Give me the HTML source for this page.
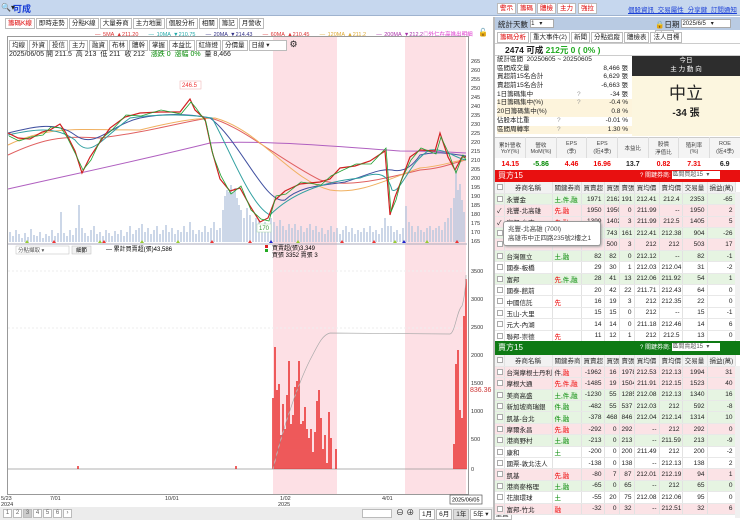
<!DOCTYPE html>
<html><head><meta charset="utf-8"><style>
*{box-sizing:border-box;margin:0;padding:0}
body{width:740px;height:520px;overflow:hidden;background:#fff;font-family:"Liberation Sans","Noto Sans CJK TC",sans-serif;font-size:7px;color:#222;position:relative}
.abs{position:absolute}
.btn{position:absolute;border:1px solid #bbb;background:#fff;font-size:6.5px;line-height:9px;padding:0 2px}
.tab{display:inline-block;border:1px solid #bbb;background:#fff;padding:0 2px;font-size:6.5px;line-height:9px;margin-right:1px}
table{border-collapse:collapse;table-layout:fixed}
.t td{height:11.4px;font-size:6.5px;border-right:1px solid #e2e2e2;border-bottom:1px solid #e8e8e8;padding:0 2px;text-align:right;white-space:nowrap;overflow:hidden}
.t td:nth-child(2),.t td:nth-child(3){text-align:left}
.t tr.h td{background:#f2f2f2;text-align:center;color:#333}
.g td{background:#e6f4e2}.p td{background:#fbe3e6}
.r{color:#e00}.gr{color:#080}
.cb{display:inline-block;width:6px;height:6px;border:1px solid #aaa;background:#fff;vertical-align:middle}
.st div{height:8.7px;line-height:8.7px;font-size:6.5px;position:relative}
.st span{position:absolute;right:4px}
.pg{display:inline-block;width:9px;height:9px;border:1px solid #bbb;background:#fff;font-size:6px;line-height:7px;text-align:center;margin-right:1px;color:#666}
</style></head><body>
<div class="abs" style="left:0;top:0;width:740px;height:16px;background:#c6d7ee;border-bottom:1px solid #9fb3cf"></div>
<div class="abs" style="left:1px;top:3px;font-size:8px">🔍▾</div>
<div class="abs" style="left:13px;top:2px;font-size:9px;color:#1a3fd6;font-weight:bold">可成</div>
<div class="btn" style="left:497px;top:3px;color:#d00">警示</div>
<div class="btn" style="left:517px;top:3px;color:#d00">籌碼</div>
<div class="btn" style="left:537px;top:3px;color:#d00">體檢</div>
<div class="btn" style="left:557px;top:3px;color:#d00">主力</div>
<div class="btn" style="left:578px;top:3px;color:#d00">強拉</div>
<div class="abs" style="left:628px;top:4px;font-size:6.5px;color:#1a3fd6;text-decoration:underline;word-spacing:2px">個股資訊 交易屬性 分享鍵 訂閱通知</div>
<div class="abs" style="left:5px;top:18px"><span class="tab" style="color:#d00">籌碼K線</span><span class="tab">即時走勢</span><span class="tab">分點K線</span><span class="tab">大量券商</span><span class="tab">主力地圖</span><span class="tab">個股分析</span><span class="tab">相關</span><span class="tab">籌記</span><span class="tab">月營收</span></div>
<div class="abs" style="left:95px;top:30px;font-size:5.5px;white-space:nowrap;word-spacing:1px"><span style="color:#d33">— 5MA ▲211.20</span>&nbsp;&nbsp;&nbsp;&nbsp;<span style="color:#2aa">— 10MA ▼210.75</span>&nbsp;&nbsp;&nbsp;&nbsp;<span style="color:#338">— 20MA ▼214.43</span>&nbsp;&nbsp;&nbsp;&nbsp;<span style="color:#d33">— 60MA ▲210.45</span>&nbsp;&nbsp;&nbsp;&nbsp;<span style="color:#da3">— 120MA ▲211.2</span>&nbsp;&nbsp;&nbsp;&nbsp;<span style="color:#a3a">— 200MA ▼212.2</span><span style="color:#d3c">◎外仁在高進出明細</span></div>
<div class="abs" style="left:478px;top:28px;font-size:8px">🔓</div>
<div class="abs" style="left:7px;top:36px;width:462px;height:459px;border:1px solid #999"></div>
<div class="abs" style="left:273px;top:37px;width:64px;height:457px;background:#fde0e5"></div>
<div class="abs" style="left:405px;top:37px;width:61px;height:457px;background:#fde0e5"></div>
<div class="abs" style="left:9px;top:39px"><span class="tab">均線</span><span class="tab">外資</span><span class="tab">投信</span><span class="tab">主力</span><span class="tab">融資</span><span class="tab">布林</span><span class="tab">體幹</span><span class="tab">掌握</span><span class="tab">本益比</span><span class="tab">紅綠燈</span><span class="tab">分價量</span><span class="tab" style="width:38px">日線 ▾</span> <span style="font-size:9px">⚙</span></div>
<div class="abs" style="left:9px;top:49px;font-size:7px">2025/06/05 開 211.5 &nbsp;高 213 &nbsp;低 211 &nbsp;收 212 &nbsp;&nbsp;<span class="gr">漲跌 0 &nbsp;漲幅 0%</span> &nbsp;量 8,466</div>
<svg class="abs" style="left:0;top:0" width="495" height="520">
<g font-size="5.5" fill="#333" font-family="Liberation Sans">
<text x="471" y="63">265</text><text x="471" y="72">260</text><text x="471" y="81">255</text><text x="471" y="90">250</text><text x="471" y="99">245</text><text x="471" y="108">240</text><text x="471" y="117">235</text><text x="471" y="126">230</text><text x="471" y="135">225</text><text x="471" y="144">220</text><text x="471" y="153">215</text><text x="471" y="162">210</text><text x="471" y="171">205</text><text x="471" y="180">200</text><text x="471" y="189">195</text><text x="471" y="198">190</text><text x="471" y="207">185</text><text x="471" y="216">180</text><text x="471" y="225">175</text><text x="471" y="234">170</text><text x="471" y="243">165</text>
<text x="471" y="273">3500</text><text x="471" y="301">3000</text><text x="471" y="329">2500</text><text x="471" y="357">2000</text><text x="471" y="385">1500</text><text x="471" y="413">1000</text><text x="471" y="441">500</text><text x="471" y="471">0</text>
</g>
<text x="470" y="392" font-size="7" fill="#c33">836.36</text>
<path stroke="#b6c6de" stroke-width="1.4" d="M10 242V232M13 242V236M16 242V230M19 242V234M22 242V238M25 242V233M28 242V237M31 242V229M34 242V235M37 242V236M40 242V232M43 242V238M46 242V234M49 242V236M52 242V230M55 242V236M58 242V233M61 242V212M64 242V233M67 242V236M70 242V230M73 242V235M76 242V228M79 242V205M82 242V228M85 242V233M88 242V236M91 242V230M94 242V226M97 242V234M100 242V232M103 242V236M106 242V230M109 242V233M112 242V236M115 242V231M118 242V234M121 242V230M124 242V236M127 242V232M130 242V226M133 242V234M136 242V230M139 242V228M142 242V224M145 242V232M148 242V228M151 242V234M154 242V230M157 242V226M160 242V234M163 242V230M166 242V225M169 242V232M172 242V228M175 242V234M178 242V230M181 242V232M184 242V226M187 242V232M190 242V222M193 242V230M196 242V234M199 242V230M202 242V232M205 242V226M208 242V232M211 242V228M214 242V222M217 242V230M220 242V228M223 242V210M225 242V196M227 242V190M229 242V192M231 242V185M233 242V192M235 242V188M237 242V198M239 242V205M241 242V210M244 242V218M247 242V208M250 242V215M253 242V222M256 242V218M259 242V220M262 242V225M265 242V222M268 242V228M271 242V218M274 242V222M277 242V226M280 242V220M283 242V226M286 242V230M289 242V224M292 242V228M295 242V224M298 242V230M301 242V226M304 242V232M307 242V228M310 242V224M313 242V230M316 242V226M319 242V232M322 242V228M325 242V234M328 242V230M331 242V226M334 242V232M337 242V228M340 242V234M343 242V230M346 242V226M349 242V232M352 242V228M355 242V234M358 242V230M361 242V232M364 242V228M367 242V232M370 242V226M373 242V232M376 242V230M379 242V234M382 242V228M385 242V218M388 242V226M391 242V226M394 242V232M397 242V230M400 242V234M403 242V228M406 242V206M409 242V222M412 242V226M415 242V232M418 242V226M421 242V230M424 242V232M427 242V228M430 242V226M433 242V230M436 242V228M439 242V226M442 242V230M445 242V222M448 242V218M451 242V208M454 242V198M456 242V170M458 242V190M460 242V184M462 242V200M464 242V212"/>
<path fill="none" stroke="#b060c0" stroke-width="1" d="M8 189C70 175 150 158 210 143C260 140 330 146 400 151C430 151 450 152 466 153"/>
<path fill="none" stroke="#e06060" stroke-width="1" d="M8 155C40 140 60 135 100 138C150 132 190 120 210 118C240 125 280 160 320 180C345 188 380 180 420 170C445 168 455 162 466 160"/>
<path fill="none" stroke="#f0b060" stroke-width="1" d="M8 145C50 125 80 130 140 130C180 120 200 118 215 118C260 130 290 180 330 190C360 195 390 178 420 168C445 166 455 160 466 160"/>
<path fill="none" stroke="#4050a0" stroke-width="1" d="M8 133C30 128 55 120 75 135C95 150 110 125 140 118C170 112 195 115 210 118C240 140 265 205 285 200C300 186 320 186 345 182C365 176 380 168 392 170C400 172 410 170 420 155C440 150 455 155 466 156"/>
<path fill="none" stroke="#30a0a0" stroke-width="1" d="M8 135C30 130 55 125 75 140C90 160 100 140 130 118C160 113 195 115 212 118C230 150 250 205 270 215C290 195 320 182 360 178C380 170 388 175 392 190C400 195 410 160 430 150C445 148 455 158 466 160"/>
<path fill="none" stroke="#d02020" stroke-width="1.2" d="M8 133L18 138L30 139L42 132L50 130L60 124L66 133L75 151L82 173L90 157L100 142L110 128L125 117L140 113L160 112L180 112L190 99L195 110L205 119L212 151L220 179L230 191L240 188L250 206L260 222L268 218L275 200L285 191L300 184L320 182L330 179L340 168L355 166L370 161L385 151L390 215L395 197L400 184L410 157L420 150L435 151L440 133L448 157L455 170L462 157L466 157"/>
<path fill="none" stroke="#20a030" stroke-width="0.8" d="M9 136L19 141L31 137L43 135L51 127L61 128L67 137L76 155L83 170L91 160L101 139L111 131L126 115L141 116L161 110L181 114L191 102L196 108L206 122L213 155L221 176L231 194L241 186L251 210L261 219L269 221L276 196L286 194L301 182L321 185L331 176L341 171L356 164L371 164L386 148L391 212L396 200L401 181L411 160L421 148L436 154L441 137L449 154L456 173L463 155L466 160"/>
<rect x="180" y="81" width="21" height="8" fill="#fff" stroke="#eaa" stroke-width=".5"/><text x="182" y="87" font-size="6" fill="#e33">246.5</text>
<rect x="257" y="224" width="14" height="8" fill="#fff" stroke="#ada" stroke-width=".5"/><text x="259" y="230" font-size="6" fill="#393">170</text>
<g fill="#e33"><path d="M52 243l2-3 2 3z"/><path d="M102 243l2-3 2 3z"/><path d="M210 243l2-3 2 3z"/><path d="M248 243l2-3 2 3z"/><path d="M340 243l2-3 2 3z"/><path d="M372 243l2-3 2 3z"/><path d="M455 243l2-3 2 3z"/></g>
<g fill="#9c3"><path d="M25 243l2-3 2 3z"/><path d="M98 243l2-3 2 3z"/><path d="M140 243l2-3 2 3z"/><path d="M176 243l2-3 2 3z"/><path d="M296 243l2-3 2 3z"/><path d="M393 243l2-3 2 3z"/><path d="M425 243l2-3 2 3z"/></g>
<g fill="#22c"><path d="M269 243l2-3 2 3z"/><path d="M402 243l2-3 2 3z"/></g>
<line x1="8" y1="244" x2="467" y2="244" stroke="#aab" stroke-width="1"/>
<line x1="8" y1="271" x2="467" y2="271" stroke="#eee" stroke-dasharray="2 2"/>
<line x1="8" y1="328" x2="467" y2="328" stroke="#eee" stroke-dasharray="2 2"/>
<line x1="8" y1="469" x2="467" y2="469" stroke="#999" stroke-width=".8"/>
<path stroke="#e82020" stroke-width="1.4" d="M273 469V398M275 469V347M277 469V390M279 469V384M281 469V435M283 469V404M285 469V429M287 469V395M289 469V361M291 469V424M293 469V415M295 469V387M297 469V381M299 469V361M301 469V424M303 469V421M305 469V407M307 469V429M309 469V438M311 469V429M313 469V452M315 469V432M317 469V401M319 469V390M321 469V418M323 469V449M325 469V435M327 469V463M329 469V412M331 469V438M336 469V449M78 469V466M236 469V466M454 469V444M456 469V364M458 469V350M460 469V410M462 469V418M464 469V316M466 469V279"/>
<path fill="none" stroke="#aaa" stroke-width=".7" d="M273 469C285 420 300 380 310 360C318 345 322 335 330 333L450 334C455 333 457 310 462 306C464 300 466 285 466 275"/>
<rect x="16" y="246" width="53" height="8" fill="#fff" stroke="#bbb" stroke-width=".5"/><text x="18" y="252" font-size="5.5" fill="#555">分點擷取 ▾</text>
<rect x="72" y="246" width="19" height="8" fill="#f2f2f2" stroke="#bbb" stroke-width=".5"/><text x="76" y="252" font-size="5.5">細節</text>
<text x="106" y="251" font-size="6">— 累計買賣超(張)43,586</text>
<rect x="265" y="245" width="3" height="3" fill="#d22"/><rect x="265" y="249" width="3" height="3" fill="#2a2"/>
<text x="272" y="250" font-size="6">買賣超(張)3,349</text><text x="272" y="257" font-size="6">買張 3352 賣張 3</text>
<g font-size="5.5" fill="#333"><text x="1" y="500">5/23</text><text x="1" y="506">2024</text><text x="50" y="500">7/01</text><text x="165" y="500">10/01</text><text x="280" y="500">1/02</text><text x="278" y="506">2025</text><text x="382" y="500">4/01</text></g>
<rect x="450" y="495" width="32" height="9" fill="#fff" stroke="#555" stroke-width=".7"/><text x="452" y="501.5" font-size="5.5">2025/06/05</text>
</svg>
<div class="abs" style="left:0;top:507px;width:495px;height:13px;background:#ececec"></div>
<div class="abs" style="left:3px;top:509px"><span class="pg">1</span><span class="pg">2</span><span class="pg" style="background:#ccc">3</span><span class="pg">4</span><span class="pg">5</span><span class="pg">6</span><span class="pg">›</span></div>
<div class="abs" style="left:362px;top:509px;width:30px;height:9px;border:1px solid #bbb;background:#fff"></div>
<div class="abs" style="left:396px;top:507px;font-size:8px">⊖ ⊕</div>
<div class="abs" style="left:419px;top:509px"><span class="tab">1月</span><span class="tab">6月</span><span class="tab" style="background:#ddd">1年</span><span class="tab">5年 ▾</span><span class="tab">重置</span></div>
<div class="abs" style="left:493px;top:17px;width:2px;height:503px;background:#bbb"></div>
<div class="abs" style="left:495px;top:17px;width:245px;height:13px;background:#b9cbe3"></div>
<div class="abs" style="left:498px;top:19px;font-size:7.5px">統計天數 <span style="display:inline-block;width:24px;height:9px;background:#fff;border:1px solid #aaa;font-size:6px;vertical-align:top">1 &nbsp;&nbsp;▾</span></div>
<div class="abs" style="left:655px;top:19px;font-size:7.5px">🔒日期 <span style="display:inline-block;width:50px;height:9px;background:#fff;border:1px solid #aaa;font-size:6px;vertical-align:top">2025/6/5 &nbsp;&nbsp;▾</span> <span class="tab">今天</span></div>
<div class="abs" style="left:497px;top:32px"><span class="tab" style="color:#d00">籌碼分析</span><span class="tab">重大事件(2)</span><span class="tab">新聞</span><span class="tab">分點追蹤</span><span class="tab">體檢表</span><span class="tab">法人目標</span></div>
<div class="abs" style="left:495px;top:43px;width:245px;height:13px;border-top:1px solid #ccc;border-bottom:1px solid #ccc"></div>
<div class="abs" style="left:505px;top:44px;font-size:8.5px;font-weight:bold">2474 可成 <span style="color:#2a2">212元 0 ( 0% )</span></div>
<div class="abs st" style="left:497px;top:56px;width:135px">
<div>統計區間 &nbsp;20250605 ~ 20250605</div>
<div>區間成交量<span>8,466 張</span></div>
<div>買超前15名合計<span>6,629 張</span></div>
<div>賣超前15名合計<span>-6,663 張</span></div>
<div>1日籌碼集中<b style="position:absolute;left:80px;font-weight:normal;color:#999">?</b><span>-34 張</span></div>
<div style="background:#fdf4dc">1日籌碼集中(%)<b style="position:absolute;left:80px;font-weight:normal;color:#999">?</b><span>-0.4 %</span></div>
<div style="background:#fdf4dc">20日籌碼集中(%)<span>0.8 %</span></div>
<div>佔股本比重<b style="position:absolute;left:60px;font-weight:normal;color:#999">?</b><span>-0.01 %</span></div>
<div style="background:#fdf4dc">區間周轉率<b style="position:absolute;left:60px;font-weight:normal;color:#999">?</b><span>1.30 %</span></div>
</div>
<div class="abs" style="left:632px;top:56px;width:108px;height:20px;background:#2d2d2d;color:#fff;text-align:center;font-size:6.5px;line-height:9px">今日<br>主 力 動 向</div>
<div class="abs" style="left:632px;top:76px;width:108px;height:60px;background:#fcf6df;text-align:center"><div style="font-size:17px;margin-top:8px;line-height:20px">中立</div><div style="font-size:10px;font-weight:bold">-34 張</div></div>
<table class="abs" style="left:495px;top:137px;width:245px;border-top:1px solid #ccc">
<tr style="height:20px;background:#f4f4f4;font-size:5.5px;text-align:center;color:#444"><td style="border-right:1px solid #ddd">累計營收<br>YoY(%)</td><td style="border-right:1px solid #ddd">營收<br>MoM(%)</td><td style="border-right:1px solid #ddd">EPS<br>(季)</td><td style="border-right:1px solid #ddd">EPS<br>(近4季)</td><td style="border-right:1px solid #ddd">本益比</td><td style="border-right:1px solid #ddd">股價<br>淨值比</td><td style="border-right:1px solid #ddd">殖利率<br>(%)</td><td>ROE<br>(近4季)</td></tr>
<tr style="height:13px;font-size:7px;font-weight:bold;text-align:center"><td class="r">14.15</td><td class="gr">-5.86</td><td class="r">4.46</td><td class="r">16.96</td><td>13.7</td><td class="r">0.82</td><td class="r">7.31</td><td>6.9</td></tr>
</table>
<div class="abs" style="left:495px;top:170px;width:245px;height:12px;background:#e81010;color:#fff;font-size:8px;line-height:12px;padding-left:3px">買方15<span style="position:absolute;left:145px;font-size:6px">? 關鍵券商: <span style="display:inline-block;width:48px;height:8px;background:#fff;color:#555;vertical-align:middle;line-height:8px">區間買超15 &nbsp;▾</span></span></div>
<table class="t abs" style="left:495px;top:182px;width:240px">
<colgroup><col style="width:9px"><col style="width:48px"><col style="width:29px"><col style="width:23px"><col style="width:15px"><col style="width:15px"><col style="width:25px"><col style="width:23px"><col style="width:25px"><col style="width:28px"></colgroup>
<tr class="h"><td><span class="cb"></span></td><td style="text-align:center">券商名稱</td><td style="text-align:center">關鍵券商</td><td>買賣超</td><td>買張</td><td>賣張</td><td>買均價</td><td>賣均價</td><td>交易量</td><td>損益(萬)</td></tr>
<tr class="g"><td><span class="cb"></span></td><td>永豐金</td><td><span class="gr">土,件,融</span></td><td>1971</td><td>2162</td><td>191</td><td>212.41</td><td>212.4</td><td>2353</td><td>-65</td></tr>
<tr class="p"><td>✓</td><td>兆豐-北高雄</td><td><span class="r">先,融</span></td><td>1950</td><td>1950</td><td>0</td><td>211.99</td><td>--</td><td>1950</td><td>2</td></tr>
<tr class="p"><td>✓</td><td>富邦-台南</td><td><span class="r">先,融</span></td><td>1399</td><td>1402</td><td>3</td><td>211.99</td><td>212.5</td><td>1405</td><td>5</td></tr>
<tr class="g"><td><span class="cb"></span></td><td></td><td></td><td>582</td><td>743</td><td>161</td><td>212.41</td><td>212.38</td><td>904</td><td>-26</td></tr>
<tr class="p"><td><span class="cb"></span></td><td></td><td></td><td>497</td><td>500</td><td>3</td><td>212</td><td>212</td><td>503</td><td>17</td></tr>
<tr class="g"><td><span class="cb"></span></td><td>台灣匯立</td><td><span class="gr">土,融</span></td><td>82</td><td>82</td><td>0</td><td>212.12</td><td>--</td><td>82</td><td>-1</td></tr>
<tr><td><span class="cb"></span></td><td>國泰-板橋</td><td></td><td>29</td><td>30</td><td>1</td><td>212.03</td><td>212.04</td><td>31</td><td>-2</td></tr>
<tr class="g"><td><span class="cb"></span></td><td>富邦</td><td><span class="r">先</span><span class="gr">,件,融</span></td><td>28</td><td>41</td><td>13</td><td>212.06</td><td>211.92</td><td>54</td><td>1</td></tr>
<tr><td><span class="cb"></span></td><td>國泰-館前</td><td></td><td>20</td><td>42</td><td>22</td><td>211.71</td><td>212.43</td><td>64</td><td>0</td></tr>
<tr><td><span class="cb"></span></td><td>中國信託</td><td><span class="r">先</span></td><td>16</td><td>19</td><td>3</td><td>212</td><td>212.35</td><td>22</td><td>0</td></tr>
<tr><td><span class="cb"></span></td><td>玉山-大里</td><td></td><td>15</td><td>15</td><td>0</td><td>212</td><td>--</td><td>15</td><td>-1</td></tr>
<tr><td><span class="cb"></span></td><td>元大-內湖</td><td></td><td>14</td><td>14</td><td>0</td><td>211.18</td><td>212.46</td><td>14</td><td>6</td></tr>
<tr><td><span class="cb"></span></td><td>聯邦-崇德</td><td><span class="r">先</span></td><td>11</td><td>12</td><td>1</td><td>212</td><td>212.5</td><td>13</td><td>0</td></tr>
</table>
<div class="abs" style="left:735px;top:192px;width:5px;height:148px;background:#f0f0f0"></div>
<div class="abs" style="left:503px;top:221px;width:98px;height:25px;background:#fff;border:1px solid #999;border-radius:3px;box-shadow:1px 1px 2px #aaa;font-size:6.5px;line-height:9px;padding:3px 4px;color:#444">兆豐-北高雄 (700l)<br>高雄市中正四路235號2樓之1</div>
<div class="abs" style="left:495px;top:341px;width:245px;height:14px;background:#0e7a14;color:#fff;font-size:8px;line-height:14px;padding-left:3px">賣方15<span style="position:absolute;left:145px;font-size:6px">? 關鍵券商: <span style="display:inline-block;width:48px;height:8px;background:#fff;color:#555;vertical-align:middle;line-height:8px">區間賣超15 &nbsp;▾</span></span></div>
<table class="t abs" style="left:495px;top:355px;width:240px">
<colgroup><col style="width:9px"><col style="width:48px"><col style="width:29px"><col style="width:23px"><col style="width:15px"><col style="width:15px"><col style="width:25px"><col style="width:23px"><col style="width:25px"><col style="width:28px"></colgroup>
<tr class="h"><td><span class="cb"></span></td><td style="text-align:center">券商名稱</td><td style="text-align:center">關鍵券商</td><td>買賣超</td><td>買張</td><td>賣張</td><td>買均價</td><td>賣均價</td><td>交易量</td><td>損益(萬)</td></tr>
<tr class="p"><td><span class="cb"></span></td><td>台灣摩根士丹利</td><td>件,<span class="r">融</span></td><td>-1962</td><td>16</td><td>1978</td><td>212.53</td><td>212.13</td><td>1994</td><td>31</td></tr>
<tr class="p"><td><span class="cb"></span></td><td>摩根大通</td><td><span class="r">先,件,融</span></td><td>-1485</td><td>19</td><td>1504</td><td>211.91</td><td>212.15</td><td>1523</td><td>40</td></tr>
<tr class="g"><td><span class="cb"></span></td><td>美商高盛</td><td><span class="gr">土,件,融</span></td><td>-1230</td><td>55</td><td>1285</td><td>212.08</td><td>212.13</td><td>1340</td><td>16</td></tr>
<tr class="g"><td><span class="cb"></span></td><td>新加坡商瑞銀</td><td><span class="gr">件,融</span></td><td>-482</td><td>55</td><td>537</td><td>212.03</td><td>212</td><td>592</td><td>-8</td></tr>
<tr class="g"><td><span class="cb"></span></td><td>凱基-台北</td><td><span class="gr">件,融</span></td><td>-378</td><td>468</td><td>846</td><td>212.04</td><td>212.14</td><td>1314</td><td>10</td></tr>
<tr class="p"><td><span class="cb"></span></td><td>摩爾永昌</td><td><span class="r">先,融</span></td><td>-292</td><td>0</td><td>292</td><td>--</td><td>212</td><td>292</td><td>0</td></tr>
<tr class="g"><td><span class="cb"></span></td><td>港商野村</td><td><span class="gr">土,融</span></td><td>-213</td><td>0</td><td>213</td><td>--</td><td>211.59</td><td>213</td><td>-9</td></tr>
<tr><td><span class="cb"></span></td><td>康和</td><td><span class="gr">土</span></td><td>-200</td><td>0</td><td>200</td><td>211.49</td><td>212</td><td>200</td><td>-2</td></tr>
<tr><td><span class="cb"></span></td><td>國票-敦北法人</td><td></td><td>-138</td><td>0</td><td>138</td><td>--</td><td>212.13</td><td>138</td><td>2</td></tr>
<tr class="p"><td><span class="cb"></span></td><td>凱基</td><td><span class="r">先,融</span></td><td>-80</td><td>7</td><td>87</td><td>212.01</td><td>212.19</td><td>94</td><td>1</td></tr>
<tr class="g"><td><span class="cb"></span></td><td>港商麥格理</td><td><span class="gr">土,融</span></td><td>-65</td><td>0</td><td>65</td><td>--</td><td>212</td><td>65</td><td>0</td></tr>
<tr><td><span class="cb"></span></td><td>花旗環球</td><td><span class="gr">土</span></td><td>-55</td><td>20</td><td>75</td><td>212.08</td><td>212.06</td><td>95</td><td>0</td></tr>
<tr class="p"><td><span class="cb"></span></td><td>富邦-竹北</td><td><span class="r">融</span></td><td>-32</td><td>0</td><td>32</td><td>--</td><td>212.51</td><td>32</td><td>6</td></tr>
</table>
<div class="abs" style="left:735px;top:366px;width:5px;height:152px;background:#f0f0f0"></div>
</body></html>
